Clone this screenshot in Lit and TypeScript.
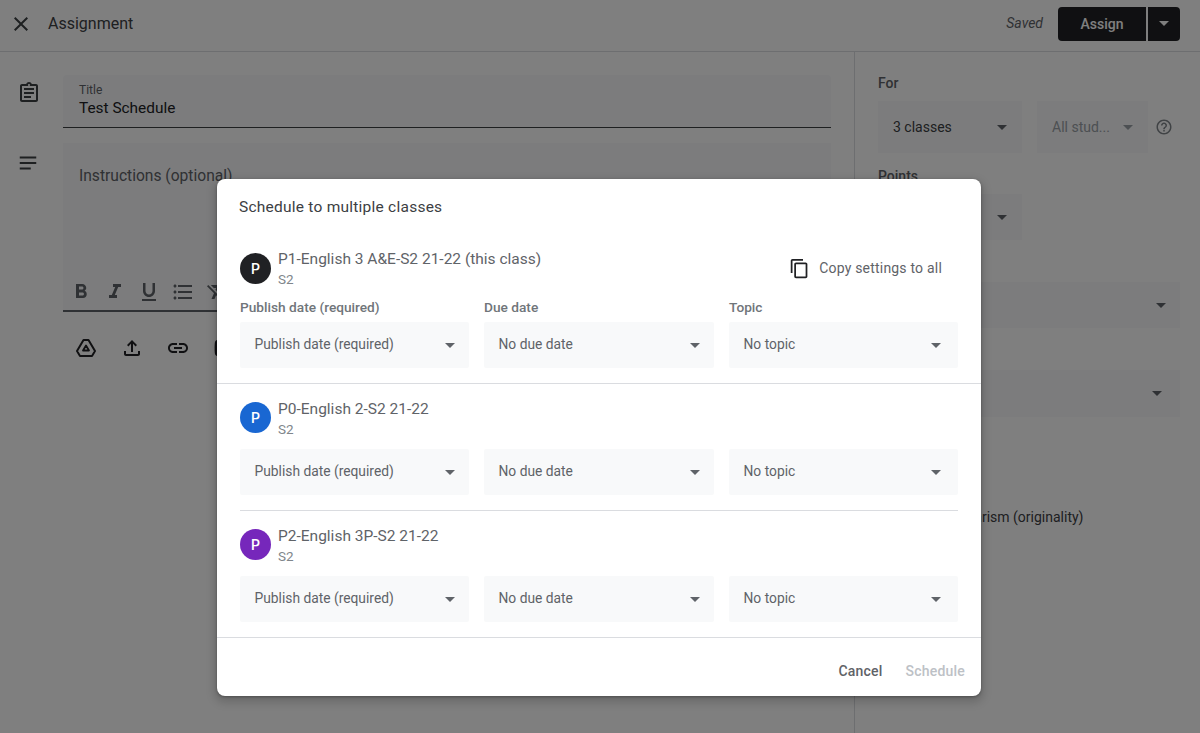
import { LitElement, html, css, svg } from "lit";
import { customElement } from "lit/decorators.js";

const P = {
  close: "M19 6.41L17.59 5 12 10.59 6.41 5 5 6.41 10.59 12 5 17.59 6.41 19 12 13.41 17.59 19 19 17.59 13.41 12z",
  assignment: "M19 3h-4.18C14.4 1.84 13.3 1 12 1c-1.3 0-2.4.84-2.82 2H5c-1.1 0-2 .9-2 2v14c0 1.1.9 2 2 2h14c1.1 0 2-.9 2-2V5c0-1.1-.9-2-2-2zm-7 0c.55 0 1 .45 1 1s-.45 1-1 1-1-.45-1-1 .45-1 1-1zm7 16H5V5h14v14zM7 15h7v2H7zM7 11h10v2H7zM7 7h10v2H7z",
  notes: "M3 5h18v2H3zM3 11h18v2H3zM3 17h12v2H3z",
  bold: "M15.6 10.79c.97-.67 1.65-1.77 1.65-2.79 0-2.26-1.75-4-4-4H7v14h7.04c2.09 0 3.71-1.7 3.71-3.79 0-1.52-.86-2.82-2.15-3.42zM10 6.5h3c.83 0 1.5.67 1.5 1.5s-.67 1.5-1.5 1.5h-3v-3zm3.5 9H10v-3h3.5c.83 0 1.5.67 1.5 1.5s-.67 1.5-1.5 1.5z",
  italic: "M10 4v3h2.21l-3.42 8H6v3h8v-3h-2.21l3.42-8H18V4z",
  underline: "M12 17c3.31 0 6-2.69 6-6V3h-2.5v8c0 1.93-1.57 3.5-3.5 3.5S8.5 12.93 8.5 11V3H6v8c0 3.31 2.69 6 6 6zm-7 2v2h14v-2H5z",
  list: "M4 10.5c-.83 0-1.5.67-1.5 1.5s.67 1.5 1.5 1.5 1.5-.67 1.5-1.5-.67-1.5-1.5-1.5zm0-6c-.83 0-1.5.67-1.5 1.5S3.17 7.5 4 7.5 5.5 6.83 5.5 6 4.83 4.5 4 4.5zm0 12c-.83 0-1.5.68-1.5 1.5s.68 1.5 1.5 1.5 1.5-.68 1.5-1.5-.67-1.5-1.5-1.5zM7 19h14v-2H7v2zm0-6h14v-2H7v2zm0-8v2h14V5H7z",
  clear: "M3.27 5L2 6.27l6.97 6.97L6.5 19h3l1.57-3.66L16.73 21 18 19.73 3.55 5.27 3.27 5zM6 5v.18L8.82 8h2.4l-.72 1.68 2.1 2.1L14.21 8H20V5H6z",
  upload: "M18 15v3H6v-3H4v3c0 1.1.9 2 2 2h12c1.1 0 2-.9 2-2v-3h-2zM7 9l1.41 1.41L11 7.83V16h2V7.83l2.59 2.58L17 9l-5-5-5 5z",
  link: "M3.9 12c0-1.71 1.39-3.1 3.1-3.1h4V7H7c-2.76 0-5 2.24-5 5s2.24 5 5 5h4v-1.9H7c-1.71 0-3.1-1.39-3.1-3.1zM8 13h8v-2H8v2zm9-6h-4v1.9h4c1.71 0 3.1 1.39 3.1 3.1s-1.39 3.1-3.1 3.1h-4V17h4c2.76 0 5-2.24 5-5s-2.24-5-5-5z",
  youtube: "M21 6c-.3-1-1-1.7-2-2-1.8-.4-7-.4-7-.4s-5.200 0-7 .4C4 4.300 3.300 5 3 6c-.4 1.800-.4 6-.4 6s0 4.200.4 6c.3 1 1 1.700 2 2 1.800.4 7 .4 7 .4s5.200 0 7-.4c1-.3 1.700-1 2-2 .4-1.800.4-6 .4-6s0-4.200-.4-6z",
  copy: "M16 1H4c-1.1 0-2 .9-2 2v14h2V3h12V1zm3 4H8c-1.1 0-2 .9-2 2v14c0 1.1.9 2 2 2h11c1.1 0 2-.9 2-2V7c0-1.1-.9-2-2-2zm0 16H8V7h11v14z",
  help: "M11 18h2v-2h-2v2zm1-16C6.48 2 2 6.48 2 12s4.480 10 10 10 10-4.480 10-10S17.520 2 12 2zm0 18c-4.410 0-8-3.590-8-8s3.590-8 8-8 8 3.590 8 8-3.590 8-8 8zm0-14c-2.210 0-4 1.790-4 4h2c0-1.100.9-2 2-2s2 .9 2 2c0 2-3 1.750-3 5h2c0-2.250 3-2.500 3-5 0-2.210-1.790-4-4-4z",
};

const icon = (d: string, size = 24) =>
  html`<svg class="ico" width=${size} height=${size} viewBox="0 0 24 24"><path d=${d}></path></svg>`;

const drive = svg`<path d="M9.500 4h5L21 15l-3 5H6l-3-5z" fill="none" stroke="currentColor" stroke-width="2" stroke-linejoin="round"></path><path d="M12 9.500L15 14.500H9z" fill="none" stroke="currentColor" stroke-width="1.800" stroke-linejoin="round"></path>`;

const caret = html`<span class="caret"></span>`;

const classes = [
  { name: "P1-English 3 A&E-S2 21-22 (this class)", color: "#202124", kind: "first" },
  { name: "P0-English 2-S2 21-22", color: "#1967d2", kind: "next inset" },
  { name: "P2-English 3P-S2 21-22", color: "#7627bb", kind: "next" },
];

@customElement("app-root")
export class AppRoot extends LitElement {
  static styles = css`
    :host { display: block; width: 1200px; height: 733px; overflow: hidden; position: relative; background: #fff;
      font-family: Roboto, "Liberation Sans", sans-serif; color: #3c4043; }
    .ico { display: block; fill: currentColor; flex: none; }

    .caret { display: block; flex: none; width: 0; height: 0; border-left: 5px solid transparent; border-right: 5px solid transparent; border-top: 5px solid #5f6368; }

    .top { height: 51px; border-bottom: 1px solid #dadce0; display: flex; align-items: center; padding: 0 20px 0 9px; }
    .top .x { color: #3c4043; margin-right: 15px; margin-top: -4px; }
    .top h1 { margin: -4px 0 0; font: 400 16px Roboto, sans-serif; color: #3c4043; letter-spacing: 0; flex: 1; }
    .saved { font-size: 14px; font-style: italic; color: #5f6368; margin-right: 15px; margin-top: -6px; }
    .assign { display: flex; height: 34px; gap: 2px; margin-top: -4px; }
    .assign div { background: #202124; display: flex; align-items: center; justify-content: center; color: #fff; }
    .assign .a { width: 88px; border-radius: 4px 0 0 4px; font-size: 14px; font-weight: 500; }
    .assign .b { width: 32px; border-radius: 0 4px 4px 0; }
    .assign .caret { border-top-color: #fff; }

    .main { display: flex; height: 681px; }
    .left { width: 854px; border-right: 1px solid #dadce0; display: grid; grid-template-columns: 63px 768px; grid-auto-rows: min-content; padding-top: 23px; }
    .gutter { padding-left: 17px; padding-top: 6px; }
    .gutter .ico { color: #3c4043; }
    .title { height: 53px; background: #f8f9fa; border-bottom: 1px solid #3c4043; padding: 8px 16px 0; box-sizing: border-box; border-radius: 4px 4px 0 0; }
    .title small { display: block; font-size: 12px; line-height: 14px; color: #5f6368; }
    .title span { display: block; font-size: 15.400px; line-height: 20px; color: #202124; margin-top: 1px; }
    .editor { margin-top: 15px; height: 169px; background: #f8f9fa; border-bottom: 2px solid #5f6368; padding: 23px 16px 0; box-sizing: border-box; display: flex; flex-direction: column; justify-content: space-between; }
    .editor > span { font-size: 15.600px; line-height: 20px; color: #5f6368; }
    .tools { display: flex; gap: 10px; color: #5f6368; margin-left: -10px; padding-bottom: 6px; }
    .attach { grid-column: 2; display: flex; gap: 22px; padding: 24px 0 0 11px; color: #202124; }
    .gut2 { padding-top: 24px; }

    .right { flex: 1; padding: 22px 0 0 23px; }
    .lab { font-size: 14px; font-weight: 500; color: #5f6368; line-height: 18px; }
    .row { display: flex; align-items: center; margin-top: 9px; gap: 15px; }
    .sel { background: #f8f9fa; display: flex; align-items: center; justify-content: space-between; box-sizing: border-box; font-size: 14px; color: #3c4043; padding: 0 15px; }
    .s1 { width: 144px; height: 52px; }
    .s2 { width: 111px; height: 52px; color: #9aa0a6; }
    .s2 .caret { border-top-color: #9aa0a6; }
    .help { color: #80868b; margin-left: -8px; }
    .pts { margin-top: 14px; }
    .s3 { width: 144px; height: 46px; margin-top: 9px; }
    .w { width: 302px; height: 46px; justify-content: flex-end; padding-right: 14px; }
    .w1 { margin-top: 42px; }
    .w2 { margin-top: 42px; height: 47px; padding-right: 18px; }
    .plag { margin: 92px 0 0 0; font-size: 14px; color: #3c4043; padding-left: 24px; }

    .scrim { position: absolute; inset: 0; background: rgba(0, 0, 0, .5); }
    .dialog { position: absolute; left: 217px; top: 179px; width: 764px; height: 517px; background: #fff; border-radius: 8px;
      box-shadow: 0 4px 8px 3px rgba(0,0,0,.15), 0 1px 3px rgba(0,0,0,.3); display: flex; flex-direction: column; }
    .dialog h2 { margin: 0; font: 400 15.500px Roboto, sans-serif; letter-spacing: .24px; color: #3c4043; padding: 20px 22px 0; line-height: 17px; height: 50px; box-sizing: border-box; }
    .sec { padding: 0 23px; border-bottom: 1px solid #dadce0; box-sizing: border-box; }
    .sec.first { height: 155px; padding-top: 20px; }
    .sec.next { height: 127px; padding-top: 14px; }
    .sec.inset { margin: 0 23px; padding: 14px 0 0; }
    .head { display: flex; align-items: center; height: 40px; }
    .ava { width: 31px; height: 31px; border-radius: 50%; color: #fff; display: flex; align-items: center; justify-content: center; font-size: 14px; font-weight: 500; flex: none; margin: -1px 7px 0 0; }
    .names { flex: 1; }
    .nm { font-size: 15.500px; line-height: 20px; color: #5f6368; margin-top: -2px; }
    .sub { font-size: 13.500px; line-height: 15px; color: #80868b; margin-top: 3px; }
    .next .nm { margin-top: 0; }
    .copy { display: flex; align-items: center; gap: 9px; font: 400 14px Roboto, sans-serif; letter-spacing: .2px; color: #5f6368; margin-right: 16px; margin-top: -2px; }
    .copy .ico { color: #202124; }
    .cols { display: grid; grid-template-columns: 229px 230px 229px; column-gap: 15px; }
    .labs { margin-top: 10px; font-size: 13.700px; font-weight: 500; color: #70757a; line-height: 16px; height: 23px; }
    .next .cols { margin-top: 11px; }
    .dd { height: 46px; background: #f8f9fa; display: flex; align-items: center; justify-content: space-between; padding: 0 14px 0 15px; font-size: 13.800px; color: #5f6368; border-radius: 2px; }
    .dd:last-child { padding-right: 17px; }
    .dd span:first-child { margin-top: -2px; margin-left: -.5px; }
    .foot { flex: 1; display: flex; justify-content: flex-end; align-items: center; gap: 23px; padding: 8px 16px 0 0; font-size: 14px; font-weight: 500; letter-spacing: .2px; color: #5f6368; }
    .foot .off { color: #bdc1c6; }
  `;

  private renderDropdowns() {
    return html`<div class="cols">
      <div class="dd"><span>Publish date (required)</span>${caret}</div>
      <div class="dd"><span>No due date</span>${caret}</div>
      <div class="dd"><span>No topic</span>${caret}</div>
    </div>`;
  }

  render() {
    return html`
      <div class="top">
        <span class="x">${icon(P.close)}</span>
        <h1>Assignment</h1>
        <span class="saved">Saved</span>
        <div class="assign"><div class="a">Assign</div><div class="b">${caret}</div></div>
      </div>
      <div class="main">
        <div class="left">
          <div class="gutter">${icon(P.assignment)}</div>
          <div class="title"><small>Title</small><span>Test Schedule</span></div>
          <div class="gutter gut2">${icon(P.notes, 22)}</div>
          <div class="editor">
            <span>Instructions (optional)</span>
            <div class="tools">
              ${[P.bold, P.italic, P.underline, P.list, P.clear].map((d) => icon(d))}
            </div>
          </div>
          <div class="attach">
            <svg class="ico" width="24" height="24" viewBox="0 0 24 24">${drive}</svg>
            ${icon(P.upload)}${icon(P.link)}${icon(P.youtube)}
          </div>
        </div>
        <div class="right">
          <div class="lab">For</div>
          <div class="row">
            <div class="sel s1"><span>3 classes</span>${caret}</div>
            <div class="sel s2"><span>All stud...</span>${caret}</div>
            <span class="help">${icon(P.help, 18)}</span>
          </div>
          <div class="lab pts">Points</div>
          <div class="sel s3"><span>100</span>${caret}</div>
          <div class="sel w w1">${caret}</div>
          <div class="sel w w2">${caret}</div>
          <div class="plag">Check plagiarism (originality)</div>
        </div>
      </div>
      <div class="scrim"></div>
      <div class="dialog">
        <h2>Schedule to multiple classes</h2>
        ${classes.map((c) => html`
          <div class="sec ${c.kind}">
            <div class="head">
              <div class="ava" style="background:${c.color}">P</div>
              <div class="names"><div class="nm">${c.name}</div><div class="sub">S2</div></div>
              ${c.kind === "first" ? html`<div class="copy">${icon(P.copy, 21)}<span>Copy settings to all</span></div>` : ""}
            </div>
            ${c.kind === "first" ? html`<div class="cols labs"><span>Publish date (required)</span><span>Due date</span><span>Topic</span></div>` : ""}
            ${this.renderDropdowns()}
          </div>
        `)}
        <div class="foot"><span>Cancel</span><span class="off">Schedule</span></div>
      </div>
    `;
  }
}
